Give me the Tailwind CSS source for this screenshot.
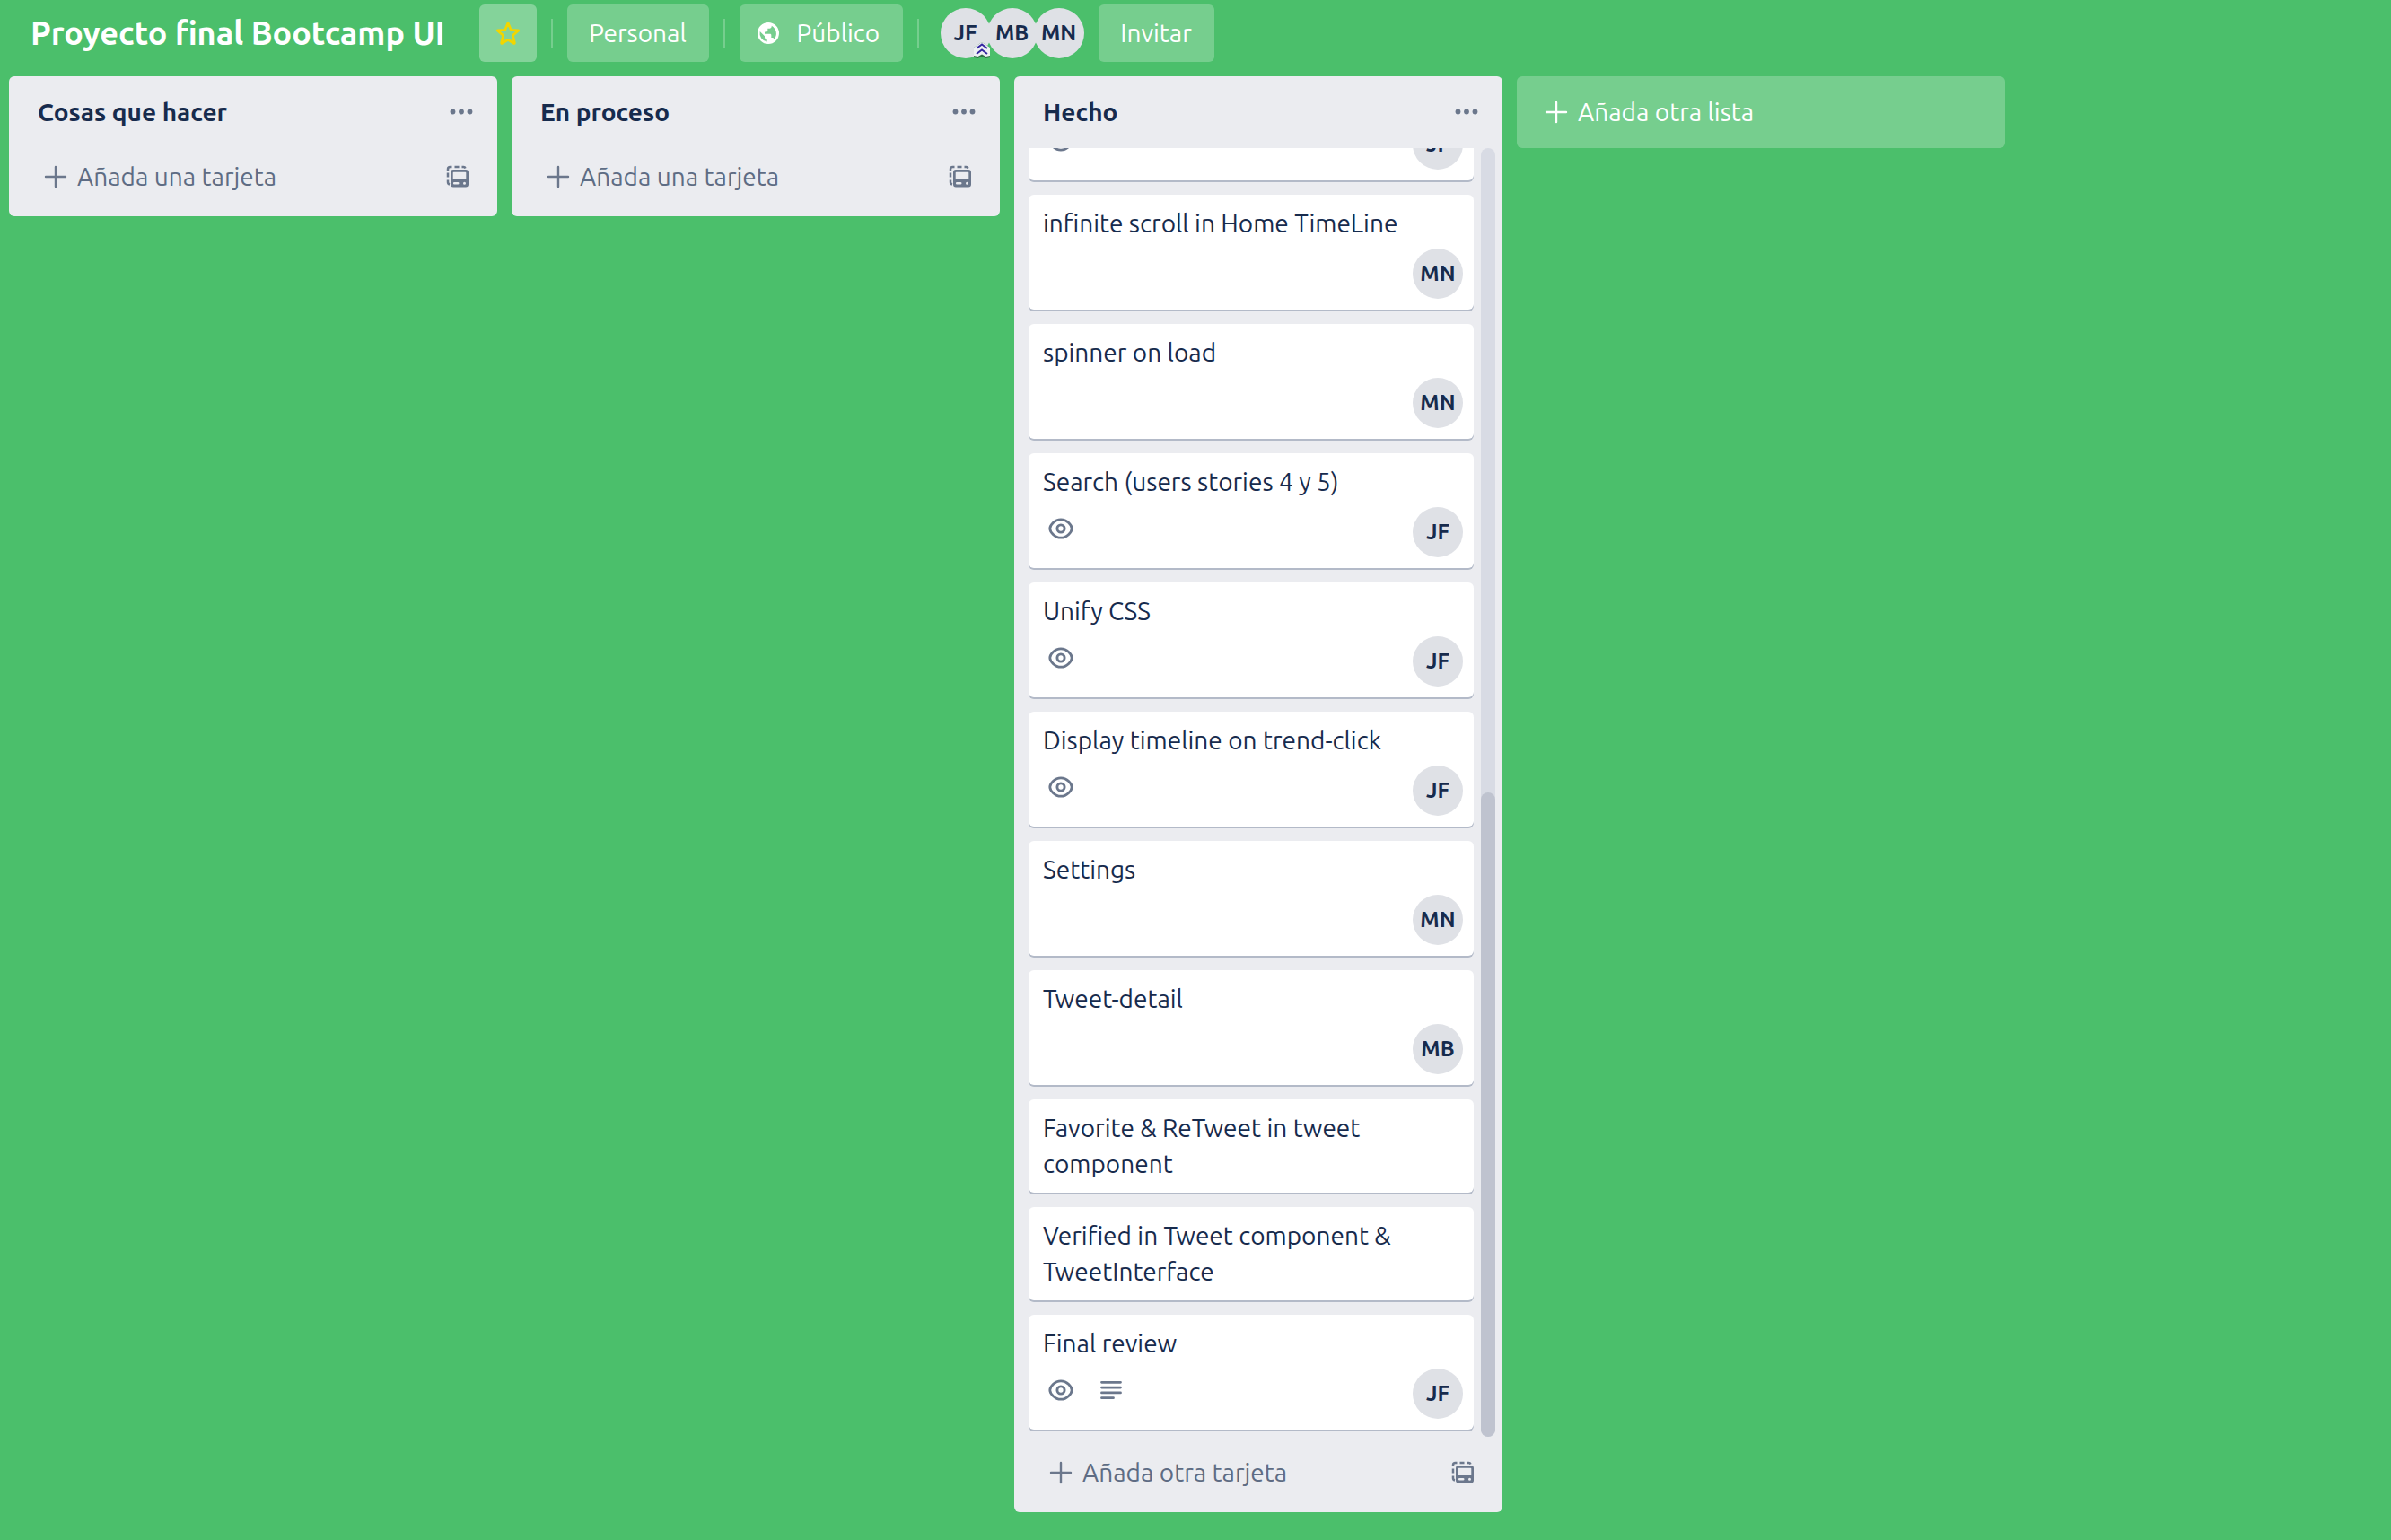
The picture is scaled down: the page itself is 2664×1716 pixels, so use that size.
<!DOCTYPE html>
<html lang="es">
<head>
<meta charset="utf-8">
<meta name="viewport" content="width=device-width, initial-scale=1">
<title>Proyecto final Bootcamp UI</title>
<script src="https://cdn.jsdelivr.net/npm/@tailwindcss/browser@4"></script>
</head>
<body class="flex h-screen flex-col overflow-hidden bg-[#4bbf6b] font-[Ubuntu,'Open_Sans',sans-serif] text-[28px] leading-[40px] text-[#172b4d]">

<!-- Shared icon shapes -->
<svg class="hidden" aria-hidden="true">
  <symbol id="i-dots" viewBox="0 0 32 32"><g fill="currentColor"><circle cx="6.5" cy="15.500" r="2.900"/><circle cx="16" cy="15.500" r="2.900"/><circle cx="25.5" cy="15.500" r="2.900"/></g></symbol>
  <symbol id="i-plus" viewBox="0 0 32 32"><path d="M16 5v22M5 16h22" fill="none" stroke="currentColor" stroke-width="2.4" stroke-linecap="round"/></symbol>
  <symbol id="i-template" viewBox="0 0 32 32">
    <path d="M5 9V7.500Q5 5 7.500 5H9.500M12.500 5h5M20.500 5h2Q24 5 24.500 6.500M5 11.500v5M5 19.500V22Q5 24 7 24.500" fill="none" stroke="currentColor" stroke-width="2.500"/>
    <path fill="currentColor" fill-rule="evenodd" d="M11 8h14a3 3 0 0 1 3 3v13.500a3 3 0 0 1-3 3H11a3 3 0 0 1-3-3V11a3 3 0 0 1 3-3zm.500 2.800q-.8 0-.8.8v7.400h14.600v-7.400q0-.8-.8-.8zM12.200 22a1.300 1.300 0 0 0 0 2.600h4a1.300 1.300 0 0 0 0-2.600zM23.500 21.800a1.500 1.500 0 1 0 0 3 1.500 1.500 0 0 0 0-3z"/>
  </symbol>
  <symbol id="i-eye" viewBox="0 0 32 32"><path d="M3.800 16C3.800 12.500 9 5.800 16 5.800S28.200 12.500 28.200 16 23 26.200 16 26.200 3.800 19.500 3.800 16z" fill="none" stroke="currentColor" stroke-width="2.800"/><circle cx="16" cy="16" r="4.100" fill="none" stroke="currentColor" stroke-width="2.900"/></symbol>
  <symbol id="i-lines" viewBox="0 0 32 32"><path d="M5.500 7.300h21M5.500 13.100h21M5.500 18.900h21M5.500 24.700h13" fill="none" stroke="currentColor" stroke-width="2.800" stroke-linecap="round"/></symbol>
</svg>

<header class="flex h-[73px] shrink-0 items-center pb-px pl-[34px] pt-[2px]">
  <h1 class="mr-[38px] text-[36px] font-bold text-white">Proyecto final Bootcamp UI</h1>
  <button aria-label="Destacar tablero" class="flex size-16 items-center justify-center rounded-md bg-white/32 text-[#f2d600]">
    <svg class="size-8" viewBox="0 0 32 32"><path d="M16 4.500l3.300 7.800 8.400.7-6.400 5.500 2 8.200c.1.600-.3.900-.8.600L16 23.300l-6.500 4c-.5.300-.9 0-.8-.6l2-8.200L4.300 13l8.400-.7z" fill="none" stroke="currentColor" stroke-width="2.800" stroke-linejoin="round"/></svg>
  </button>
  <div class="mx-4 h-8 w-[2px] bg-white/24"></div>
  <button class="h-16 w-[158px] rounded-md bg-white/24 text-white">Personal</button>
  <div class="mx-4 h-8 w-[2px] bg-white/24"></div>
  <button class="flex h-16 w-[182px] items-center gap-4 rounded-md bg-white/24 pl-4 text-white">
    <svg class="size-8" viewBox="0 0 24 24"><path fill="currentColor" d="M12 3a9 9 0 1 0 0 18 9 9 0 0 0 0-18zm-1 16.200A7.300 7.300 0 0 1 5 10.500l4 4v1c0 .9.900 1.700 2 1.700v2zm6-2.200c-.3-.7-.9-1.200-1.600-1.200h-.9v-2.300c0-.5-.4-1-.9-1H9v-1.700h1.500c.6 0 1-.4 1-1V8h1.600c.9 0 1.700-.7 1.700-1.600v-.5A7.300 7.300 0 0 1 17 17z"/></svg>
    Público
  </button>
  <div class="mx-4 h-8 w-[2px] bg-white/24"></div>
  <div class="ml-[8px] flex text-[24px] font-bold">
    <button class="relative z-10 size-14 rounded-full bg-[#dfe1e6]">JF
      <svg class="absolute right-0 bottom-0 h-[18px] w-5" viewBox="0 0 20 18">
        <path d="M1 6l9-6 9 6v11l-4.500 1-4.500-2-4.500 2L1 17z" fill="#2f6f45"/>
        <path d="M1 6l9-6 9 6v9l-4.500 1L10 13.500 5.500 16 1 15z" fill="#eef0f4"/>
        <path d="M4 7l6-4.500L16 7M4 13l6-4.500 6 4.500" fill="none" stroke="#3527a0" stroke-width="2"/>
      </svg>
    </button>
    <button class="-ml-1 size-14 rounded-full bg-[#dfe1e6]">MB</button>
    <button class="-ml-1 size-14 rounded-full bg-[#dfe1e6]">MN</button>
  </div>
  <button class="ml-4 h-16 w-[129px] rounded-md bg-white/24 text-white">Invitar</button>
</header>

<main class="flex min-h-0 flex-1 items-start gap-4 px-[10px] pb-[31px] pt-3">

  <section class="w-[544px] shrink-0 rounded-md bg-[#ebecf0]">
    <div class="flex h-20 items-center justify-between pl-8 pr-6">
      <h2 class="font-bold">Cosas que hacer</h2>
      <button aria-label="Acciones de la lista" class="text-[#6b778c]"><svg class="size-8"><use href="#i-dots"/></svg></button>
    </div>
    <div class="flex h-[76px] items-center justify-between pb-3 pl-9 pr-7">
      <button class="flex items-center gap-2 text-[#5e6c84]"><svg class="size-8 text-[#6b778c]"><use href="#i-plus"/></svg>Añada una tarjeta</button>
      <button aria-label="Crear desde plantilla" class="text-[#6b778c]"><svg class="size-8"><use href="#i-template"/></svg></button>
    </div>
  </section>

  <section class="w-[544px] shrink-0 rounded-md bg-[#ebecf0]">
    <div class="flex h-20 items-center justify-between pl-8 pr-6">
      <h2 class="font-bold">En proceso</h2>
      <button aria-label="Acciones de la lista" class="text-[#6b778c]"><svg class="size-8"><use href="#i-dots"/></svg></button>
    </div>
    <div class="flex h-[76px] items-center justify-between pb-3 pl-9 pr-7">
      <button class="flex items-center gap-2 text-[#5e6c84]"><svg class="size-8 text-[#6b778c]"><use href="#i-plus"/></svg>Añada una tarjeta</button>
      <button aria-label="Crear desde plantilla" class="text-[#6b778c]"><svg class="size-8"><use href="#i-template"/></svg></button>
    </div>
  </section>

  <section class="flex max-h-full w-[544px] shrink-0 flex-col rounded-md bg-[#ebecf0]">
    <div class="flex h-20 shrink-0 items-center justify-between pl-8 pr-6">
      <h2 class="font-bold">Hecho</h2>
      <button aria-label="Acciones de la lista" class="text-[#6b778c]"><svg class="size-8"><use href="#i-dots"/></svg></button>
    </div>

    <div class="flex min-h-0 gap-2 pl-4 pr-2">
      <!-- Cards, scrolled to the end of the list -->
      <div class="flex min-h-0 flex-1 flex-col justify-end gap-4 overflow-hidden pb-2">
        <article class="flex h-32 shrink-0 flex-col justify-end rounded-md bg-white py-3 pl-4 pr-3 shadow-[0_2px_0_#b3bac8]">
          <div class="flex items-start justify-between">
            <svg class="ml-1 mt-2 size-8 text-[#6b778c]"><use href="#i-eye"/></svg>
            <button class="size-14 rounded-full bg-[#dfe1e6] text-[24px] font-bold">JF</button>
          </div>
        </article>
        <article class="shrink-0 rounded-md bg-white py-3 pl-4 pr-3 shadow-[0_2px_0_#b3bac8]">
          <a href="#" class="block">infinite scroll in Home TimeLine</a>
          <div class="mt-2 flex justify-end"><button class="size-14 rounded-full bg-[#dfe1e6] text-[24px] font-bold">MN</button></div>
        </article>
        <article class="shrink-0 rounded-md bg-white py-3 pl-4 pr-3 shadow-[0_2px_0_#b3bac8]">
          <a href="#" class="block">spinner on load</a>
          <div class="mt-2 flex justify-end"><button class="size-14 rounded-full bg-[#dfe1e6] text-[24px] font-bold">MN</button></div>
        </article>
        <article class="shrink-0 rounded-md bg-white py-3 pl-4 pr-3 shadow-[0_2px_0_#b3bac8]">
          <a href="#" class="block">Search (users stories 4 y 5)</a>
          <div class="mt-2 flex items-start justify-between">
            <svg class="ml-1 mt-2 size-8 text-[#6b778c]"><use href="#i-eye"/></svg>
            <button class="size-14 rounded-full bg-[#dfe1e6] text-[24px] font-bold">JF</button>
          </div>
        </article>
        <article class="shrink-0 rounded-md bg-white py-3 pl-4 pr-3 shadow-[0_2px_0_#b3bac8]">
          <a href="#" class="block">Unify CSS</a>
          <div class="mt-2 flex items-start justify-between">
            <svg class="ml-1 mt-2 size-8 text-[#6b778c]"><use href="#i-eye"/></svg>
            <button class="size-14 rounded-full bg-[#dfe1e6] text-[24px] font-bold">JF</button>
          </div>
        </article>
        <article class="shrink-0 rounded-md bg-white py-3 pl-4 pr-3 shadow-[0_2px_0_#b3bac8]">
          <a href="#" class="block">Display timeline on trend-click</a>
          <div class="mt-2 flex items-start justify-between">
            <svg class="ml-1 mt-2 size-8 text-[#6b778c]"><use href="#i-eye"/></svg>
            <button class="size-14 rounded-full bg-[#dfe1e6] text-[24px] font-bold">JF</button>
          </div>
        </article>
        <article class="shrink-0 rounded-md bg-white py-3 pl-4 pr-3 shadow-[0_2px_0_#b3bac8]">
          <a href="#" class="block">Settings</a>
          <div class="mt-2 flex justify-end"><button class="size-14 rounded-full bg-[#dfe1e6] text-[24px] font-bold">MN</button></div>
        </article>
        <article class="shrink-0 rounded-md bg-white py-3 pl-4 pr-3 shadow-[0_2px_0_#b3bac8]">
          <a href="#" class="block">Tweet-detail</a>
          <div class="mt-2 flex justify-end"><button class="size-14 rounded-full bg-[#dfe1e6] text-[24px] font-bold">MB</button></div>
        </article>
        <article class="shrink-0 rounded-md bg-white py-3 pl-4 pr-12 shadow-[0_2px_0_#b3bac8]">
          <a href="#" class="block">Favorite &amp; ReTweet in tweet component</a>
        </article>
        <article class="shrink-0 rounded-md bg-white py-3 pl-4 pr-12 shadow-[0_2px_0_#b3bac8]">
          <a href="#" class="block">Verified in Tweet component &amp; TweetInterface</a>
        </article>
        <article class="shrink-0 rounded-md bg-white py-3 pl-4 pr-3 shadow-[0_2px_0_#b3bac8]">
          <a href="#" class="block">Final review</a>
          <div class="mt-2 flex items-start justify-between">
            <div class="ml-1 mt-2 flex gap-6 text-[#6b778c]">
              <svg class="size-8"><use href="#i-eye"/></svg>
              <svg class="size-8"><use href="#i-lines"/></svg>
            </div>
            <button class="size-14 rounded-full bg-[#dfe1e6] text-[24px] font-bold">JF</button>
          </div>
        </article>
      </div>
      <!-- Scrollbar -->
      <div class="flex w-4 flex-col justify-end rounded-full bg-[#d8dbe4]">
        <div class="h-1/2 rounded-full bg-[#bfc3cf]"></div>
      </div>
    </div>

    <div class="flex h-[84px] shrink-0 items-center justify-between pb-1 pl-9 pr-7">
      <button class="flex items-center gap-2 text-[#5e6c84]"><svg class="size-8 text-[#6b778c]"><use href="#i-plus"/></svg>Añada otra tarjeta</button>
      <button aria-label="Crear desde plantilla" class="text-[#6b778c]"><svg class="size-8"><use href="#i-template"/></svg></button>
    </div>
  </section>

  <button class="flex h-20 w-[544px] shrink-0 items-center gap-2 rounded-md bg-white/24 pl-7 text-white">
    <svg class="size-8"><use href="#i-plus"/></svg>Añada otra lista
  </button>
</main>
</body>
</html>
